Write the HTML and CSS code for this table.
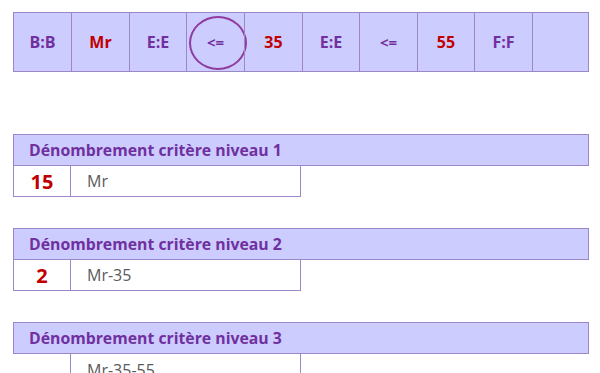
FILE: index.html
```html
<!DOCTYPE html>
<html lang="fr">
<head>
<meta charset="utf-8">
<title>Dénombrement</title>
<link rel="stylesheet" href="styles.css">
</head>
<body>
<div class="page">
  <div class="criteria">
    <div class="cell purple">B:B</div>
    <div class="cell red">Mr</div>
    <div class="cell purple">E:E</div>
    <div class="cell purple op">&lt;=<span class="ring"></span></div>
    <div class="cell red">35</div>
    <div class="cell purple">E:E</div>
    <div class="cell purple op">&lt;=</div>
    <div class="cell red">55</div>
    <div class="cell purple">F:F</div>
    <div class="cell"></div>
  </div>

  <div class="section">
    <div class="sec-head">Dénombrement critère niveau 1</div>
    <div class="sec-row">
      <div class="count">15</div>
      <div class="key">Mr</div>
    </div>
  </div>

  <div class="section">
    <div class="sec-head">Dénombrement critère niveau 2</div>
    <div class="sec-row">
      <div class="count">2</div>
      <div class="key">Mr-35</div>
    </div>
  </div>

  <div class="section">
    <div class="sec-head">Dénombrement critère niveau 3</div>
    <div class="sec-row open">
      <div class="count"></div>
      <div class="key">Mr-35-55</div>
    </div>
  </div>
</div>
</body>
</html>
```
FILE: styles.css
```css
* { box-sizing: border-box; }
html, body { margin: 0; padding: 0; background: #fff; }
body { font-family: "Open Sans", "Noto Sans", sans-serif; overflow: hidden; height: 373px; }

.page { padding: 12px 0 0 13px; }

.criteria {
  display: grid;
  grid-template-columns: 57px 58px 57px 58px 58px 57px 58px 57px 58px 57px;
  width: 576px;
  height: 60px;
  border: 1px solid #9c88c8;
  background: #ccccff;
}
.cell {
  position: relative;
  display: flex;
  align-items: center;
  justify-content: center;
  border-left: 1px solid #9c88c8;
  font-weight: 700;
  font-size: 16px;
}
.cell:first-child { border-left: none; }
.purple { color: #7030a0; }
.red { color: #c00000; }
.op { font-size: 15px; }

.ring {
  position: absolute;
  left: 2px;
  top: 3px;
  width: 58px;
  height: 54px;
  border: 2px solid #8e3c9e;
  border-radius: 50%;
}

.section { margin-top: 62px; width: 576px; }
.section + .section { margin-top: 31px; }

.sec-head {
  height: 32px;
  border: 1px solid #9c88c8;
  background: #ccccff;
  color: #7030a0;
  font-weight: 700;
  font-size: 15.8px;
  padding-left: 15px;
  display: flex;
  align-items: center;
}
.sec-row {
  display: flex;
  width: 288px;
  height: 31px;
  border: 1px solid #9c88c8;
  border-top: none;
}
.sec-row.open { border-left-color: transparent; border-bottom: none; }
.count {
  width: 57px;
  border-right: 1px solid #9c88c8;
  color: #c00000;
  font-weight: 700;
  font-size: 20px;
  display: flex;
  align-items: center;
  justify-content: center;
}
.key {
  flex: 1;
  padding-left: 16px;
  color: #5a5a5a;
  font-size: 16px;
  display: flex;
  align-items: center;
}
```
